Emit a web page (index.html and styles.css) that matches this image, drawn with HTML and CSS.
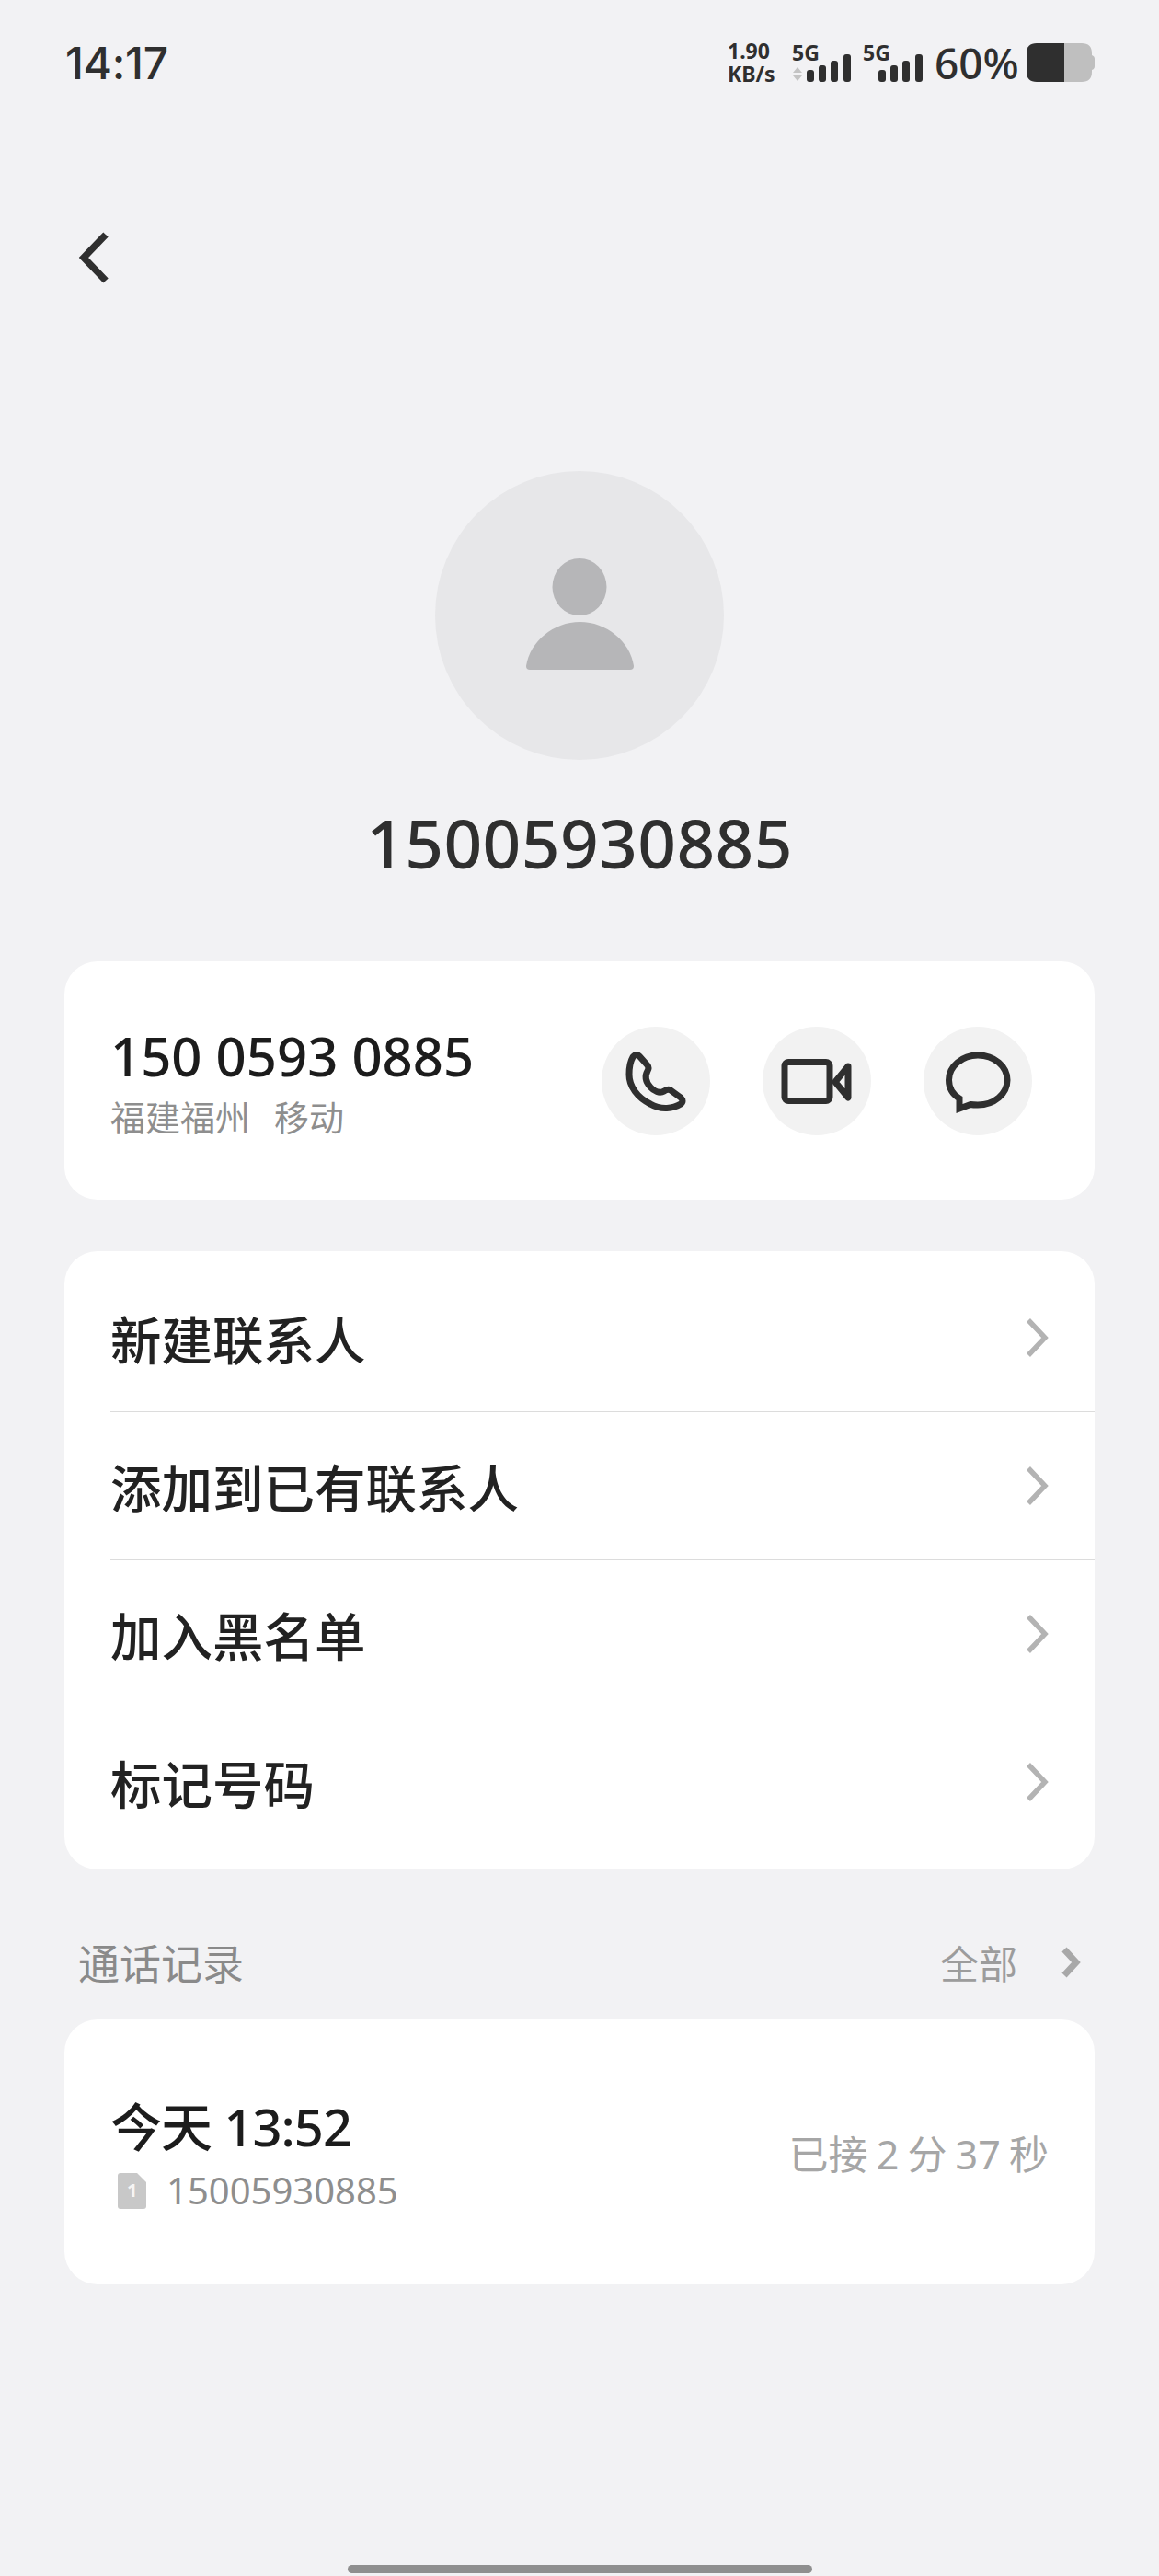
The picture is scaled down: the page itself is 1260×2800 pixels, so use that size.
FILE: index.html
```html
<html>
    <head>
        <title>Call details</title>
        <link rel="stylesheet" href="styles.css">
    </head>
    <body>
        <div class="page">
            <!-- status bar -->
            <div class="statusBar">
                <div class="clock">14:17</div>
                <div class="statusIcons">
                    <div class="speed"><span>1.90</span><span>KB/s</span></div>
                    <div class="signal signalFirst">
                        <span class="netType">5G</span>
                        <svg class="arrows" viewBox="0 0 10 15"><path d="M5 0L10 6H0Z M5 15L0 9H10Z"/></svg>
                        <svg class="bars" viewBox="0 0 48 30"><rect x="0" y="17" width="8" height="13" rx="3"/><rect x="13" y="12" width="8" height="18" rx="3"/><rect x="26" y="7" width="8" height="23" rx="3"/><rect x="40" y="0" width="8" height="30" rx="3"/></svg>
                    </div>
                    <div class="signal signalSecond">
                        <span class="netType">5G</span>
                        <svg class="bars" viewBox="0 0 48 30"><rect x="0" y="17" width="8" height="13" rx="3"/><rect x="13" y="12" width="8" height="18" rx="3"/><rect x="26" y="7" width="8" height="23" rx="3"/><rect x="40" y="0" width="8" height="30" rx="3"/></svg>
                    </div>
                    <div class="batteryText">60%</div>
                    <svg class="battery" viewBox="0 0 74 42">
                        <path class="batteryEmpty" d="M41 0H60Q71 0 71 11V13Q74 14 74 17V25Q74 28 71 29V31Q71 42 60 42H41Z"/>
                        <path class="batteryFull" d="M11 0H41V42H11Q0 42 0 31V11Q0 0 11 0Z"/>
                    </svg>
                </div>
            </div>

            <svg class="backIcon" viewBox="0 0 36 56"><path d="M31 3L7 28L31 53"/></svg>

            <!-- caller -->
            <div class="avatar">
                <svg viewBox="0 0 314 314"><ellipse cx="157" cy="126" rx="29.500" ry="31"/><path d="M103 216H212Q216 216 216 212C212 185 186 164 157.500 164C129 164 103 185 99 212Q99 216 103 216Z"/></svg>
            </div>
            <div class="callerName">15005930885</div>

            <!-- number card -->
            <div class="card numberCard">
                <div class="numberInfo">
                    <div class="number">150 0593 0885</div>
                    <div class="region"><span>福建福州</span><span>移动</span></div>
                </div>
                <div class="actions">
                    <div class="action">
                        <svg viewBox="0 0 118 118"><path d="M34 33Q38 28 42 33L50 42Q52 45 50 48C46 55 49 61 53 65.500C57 70 63 73 68 70Q72 67 75 69L86 77Q90 81 86 84C78 89 65 91 53 84C39 77 30 65 30 52C30 44 31 38 34 33Z"/></svg>
                    </div>
                    <div class="action">
                        <svg viewBox="0 0 118 118"><rect x="24" y="38.500" width="49" height="42" rx="4"/><path d="M93 43L79 60L93 77Z"/></svg>
                    </div>
                    <div class="action">
                        <svg viewBox="0 0 118 118"><path class="bubble" d="M39 89L39 78C31 73 27.500 66 27.500 58C27.500 43 42 31 59 31C77 31 91 43 91 58C91 73 77 85 59 85C56 85 54 85 51 84.500Z"/></svg>
                    </div>
                </div>
            </div>

            <!-- options -->
            <div class="card optionList">
                <div class="option"><span>新建联系人</span><svg class="chevron" viewBox="0 0 26 44"><path d="M3 3L21 22L3 41"/></svg></div>
                <div class="option"><span>添加到已有联系人</span><svg class="chevron" viewBox="0 0 26 44"><path d="M3 3L21 22L3 41"/></svg></div>
                <div class="option"><span>加入黑名单</span><svg class="chevron" viewBox="0 0 26 44"><path d="M3 3L21 22L3 41"/></svg></div>
                <div class="option"><span>标记号码</span><svg class="chevron" viewBox="0 0 26 44"><path d="M3 3L21 22L3 41"/></svg></div>
            </div>

            <!-- call history -->
            <div class="historyHeader">
                <div class="historyTitle">通话记录</div>
                <div class="historyAll">
                    <span>全部</span>
                    <svg class="chevronSmall" viewBox="0 0 22 34"><path d="M4 3L17 17L4 31"/></svg>
                </div>
            </div>
            <div class="card historyCard">
                <div class="historyInfo">
                    <div class="historyTime">今天 13:52</div>
                    <div class="historyNumber">
                        <svg class="simIcon" viewBox="0 0 31 39"><path d="M3 0H21L31 10V36Q31 39 28 39H3Q0 39 0 36V3Q0 0 3 0Z"/></svg>
                        <span class="simSlot">1</span>
                        <span>15005930885</span>
                    </div>
                </div>
                <div class="historyDuration">已接 2 分 37 秒</div>
            </div>

            <div class="homeBar"></div>
        </div>
    </body>
</html>
```

FILE: styles.css
```css
*{
    box-sizing: border-box;
}

body{
    margin: 0;
    background-color: #f2f2f4;
    font-family: "Noto Sans", "Noto Sans CJK SC", sans-serif;
    color: #2f2f2f;
}

.page{
    width: 1260px;
    height: 2800px;
    display: flex;
    flex-direction: column;
    overflow: hidden;
}

/* status bar */

.statusBar{
    height: 136px;
    padding: 0 70px 0 71px;
    display: flex;
    justify-content: space-between;
    align-items: center;
}

.clock{
    font-family: Inter, sans-serif;
    font-size: 48px;
    font-weight: 500;
    letter-spacing: -0.3px;
}

.statusIcons{
    display: flex;
    align-items: center;
    height: 42px;
}

.speed{
    width: 70px;
    display: flex;
    flex-direction: column;
    font-size: 23px;
    font-weight: 700;
    line-height: 25px;
}

.signal{
    position: relative;
    width: 70px;
    height: 42px;
}

.signalSecond{
    width: 85px;
}

.netType{
    position: absolute;
    left: 0;
    top: -5px;
    font-size: 23px;
    line-height: 30px;
    font-weight: 700;
}

.signalSecond .netType{
    left: 7px;
}

.arrows{
    position: absolute;
    left: 1px;
    top: 26px;
    width: 10px;
    height: 15px;
    fill: #c4c4c4;
}

.bars{
    position: absolute;
    left: 16px;
    top: 12px;
    width: 48px;
    height: 30px;
    fill: #2f2f2f;
}

.signalSecond .bars{
    left: 24px;
}

.batteryText{
    width: 100px;
    font-size: 46px;
    font-weight: 500;
    line-height: 42px;
}

.battery{
    width: 74px;
    height: 42px;
}

.batteryEmpty{
    fill: #bfbfbf;
}

.batteryFull{
    fill: #2f2f2f;
}

/* caller */

.backIcon{
    width: 36px;
    height: 56px;
    margin: 116px 0 0 84px;
    flex: none;
    fill: none;
    stroke: #2f2f2f;
    stroke-width: 7.500;
}

.avatar{
    width: 314px;
    height: 314px;
    margin: 204px auto 0;
    flex: none;
    background-color: #e7e7e9;
    border-radius: 50%;
}

.avatar svg{
    display: block;
    fill: #b6b6b8;
}

.callerName{
    margin-top: 40px;
    text-align: center;
    font-size: 73px;
    font-weight: 500;
    letter-spacing: 0.4px;
    line-height: 100px;
}

/* cards */

.card{
    margin: 0 70px;
    flex: none;
    background-color: white;
    border-radius: 36px;
}

.numberCard{
    height: 259px;
    margin-top: 79px;
    padding: 0 68px 0 50px;
    display: flex;
    justify-content: space-between;
    align-items: center;
}

.number{
    font-size: 58px;
    font-weight: 500;
    line-height: 76px;
    color: #1c1c1c;
}

.region{
    display: flex;
    gap: 26px;
    margin-top: 3px;
    font-size: 38px;
    line-height: 50px;
    color: #8e8e8e;
}

.actions{
    display: flex;
    gap: 57px;
}

.action{
    width: 118px;
    height: 118px;
    background-color: #f2f2f2;
    border-radius: 50%;
}

.action svg{
    display: block;
    fill: none;
    stroke: #2f2f2f;
    stroke-width: 7;
    stroke-linejoin: round;
}

.action .bubble{
    stroke-linejoin: miter;
}

.optionList{
    margin-top: 56px;
    padding: 14px 0 15px 50px;
}

.option{
    height: 161px;
    padding-right: 49px;
    display: flex;
    justify-content: space-between;
    align-items: center;
    border-bottom: 1px solid #dcdcdc;
    font-size: 55.500px;
    font-weight: 500;
    color: #222222;
}

.option:last-child{
    height: 160px;
    border-bottom: none;
}

.chevron{
    width: 26px;
    height: 44px;
    fill: none;
    stroke: #b3b3b3;
    stroke-width: 5.500;
}

/* call history */

.historyHeader{
    height: 163px;
    padding: 38px 70px 0 85px;
    display: flex;
    justify-content: space-between;
    align-items: center;
    flex: none;
}

.historyTitle{
    font-size: 45px;
    color: #8a8a8a;
}

.historyAll{
    display: flex;
    align-items: center;
    gap: 47px;
    font-size: 42px;
    color: #9c9c9c;
}

.chevronSmall{
    width: 22px;
    height: 34px;
    margin-right: 15px;
    fill: none;
    stroke: #a8a8a8;
    stroke-width: 7;
}

.historyCard{
    height: 288px;
    padding: 0 50px;
    display: flex;
    justify-content: space-between;
    align-items: center;
}

.historyTime{
    font-size: 56px;
    font-weight: 500;
    letter-spacing: -1px;
    line-height: 76px;
    color: #1c1c1c;
}

.historyNumber{
    position: relative;
    display: flex;
    align-items: center;
    gap: 22px;
    margin-top: 8px;
    padding-left: 8px;
    font-size: 40px;
    line-height: 48px;
    color: #8e8e8e;
}

.simIcon{
    width: 31px;
    height: 39px;
    fill: #c8c8c8;
}

/* sits on top of the sim card shape */
.simSlot{
    position: absolute;
    left: 18px;
    top: 12px;
    font-size: 20px;
    line-height: 24px;
    font-weight: 700;
    color: #f5f5f5;
}

.historyDuration{
    font-size: 43px;
    word-spacing: -2px;
    color: #a6a6a6;
}

.homeBar{
    width: 505px;
    height: 9px;
    margin: auto auto 3px;
    background-color: #8f8f8f;
    border-radius: 5px;
}
```
